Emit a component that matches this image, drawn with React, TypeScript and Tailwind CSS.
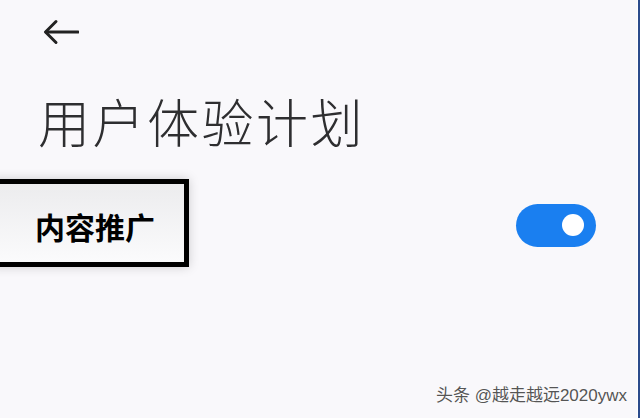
export default function App() {
  return (
    <div className="flex h-[418px] w-[640px] overflow-hidden bg-[#f9f8fb] font-['Noto_Sans_CJK_SC',sans-serif]">
      <main className="relative flex flex-1 flex-col">
        <div className="pl-[43px] pt-[19px]">
          <svg width="36" height="26" viewBox="0 0 36 26" fill="none" stroke="#222" strokeWidth="3" strokeLinecap="round" strokeLinejoin="round">
            <path d="M35 13H3" />
            <path d="M13 2.5 2.5 13 13 23.5" />
          </svg>
        </div>

        <h1 className="mt-[46px] pl-[38px] text-[52px] font-light leading-[60px] tracking-[2.5px] text-[#2e2e30]">
          用户体验计划
        </h1>

        <div className="mt-[28px] flex items-center justify-between pr-[41px]">
          <div className="-ml-[10px] flex h-[88px] w-[199px] items-center border-[5px] border-black bg-gradient-to-b from-[#ececee] to-[#fbfbfc] pl-[40px] pt-[6px] shadow-[0_0_10px_rgba(0,0,0,0.18)]">
            <span className="text-[30px] font-bold leading-none text-black">内容推广</span>
          </div>
          <div className="mt-[4px] flex h-[43px] w-[80px] items-center justify-end rounded-full bg-[#1a7ff0] pr-[12px]">
            <div className="h-[22px] w-[22px] rounded-full bg-white" />
          </div>
        </div>

        <div className="absolute bottom-[14px] right-[10px] font-['Liberation_Sans','Noto_Sans_CJK_SC',sans-serif] text-[17px] leading-none text-[#555] [text-shadow:0_0_2px_#fff,0_0_1px_#fff]">
          头条 @越走越远2020ywx
        </div>
      </main>
      <div className="w-[1px] bg-white" />
      <div className="w-[2px] bg-[#2b4b8c]" />
    </div>
  );
}
